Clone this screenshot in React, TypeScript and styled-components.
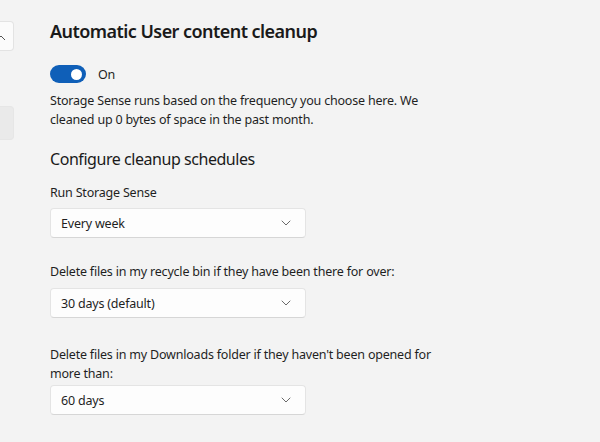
import React from "react";
import styled, { createGlobalStyle } from "styled-components";

const Global = createGlobalStyle`
  html, body { margin: 0; padding: 0; background: #f3f3f3; }
  body { font-family: "Noto Sans", "Open Sans", sans-serif; color: #1b1b1b; width: 600px; height: 442px; overflow: hidden; }
`;

const Page = styled.div`
  display: flex;
  height: 442px;
`;

const Stub = styled.div`
  width: 14px;
  display: flex;
  flex-direction: column;
  padding-top: 21px;
  gap: 55px;
`;

const StubCard = styled.div<{ $tone: "white" | "grey"; $h: number }>`
  height: ${(p) => p.$h}px;
  background: ${(p) => (p.$tone === "white" ? "#fbfbfb" : "#eaeaea")};
  border: 1px solid ${(p) => (p.$tone === "white" ? "#e3e3e3" : "#e6e6e6")};
  border-left: none;
  border-radius: 0 4px 4px 0;
  box-sizing: border-box;
  position: relative;
  overflow: hidden;
`;

const StubChevron = styled.svg`
  position: absolute;
  left: -4px;
  top: 13px;
`;

const Main = styled.div`
  margin-left: 36px;
  padding-top: 17px;
  display: flex;
  flex-direction: column;
  width: 440px;
`;

const Title = styled.h1`
  margin: 0;
  font-size: 18px;
  line-height: 28px;
  font-weight: 600;
  color: #1a1a1a;
  letter-spacing: -0.55px;
`;

const ToggleRow = styled.div`
  display: flex;
  align-items: center;
  gap: 12px;
  margin-top: 19px;
  height: 20px;
`;

const Toggle = styled.div`
  width: 36px;
  height: 18px;
  border-radius: 10px;
  background: #0f5fb8;
  position: relative;
  &::after {
    content: "";
    position: absolute;
    right: 4px;
    top: 4px;
    width: 11px;
    height: 11px;
    border-radius: 50%;
    background: #fff;
  }
`;

const Text = styled.p<{ $mt: number }>`
  margin: ${(p) => p.$mt}px 0 0;
  font-size: 12.5px;
  line-height: 19px;
  letter-spacing: -0.2px;
  color: #1f1f1f;
`;

const SubTitle = styled.h2`
  margin: 16px 0 0;
  font-size: 16px;
  line-height: 28px;
  font-weight: 400;
  letter-spacing: -0.45px;
  color: #1a1a1a;
`;

const Select = styled.div<{ $mt: number }>`
  margin-top: ${(p) => p.$mt}px;
  width: 256px;
  height: 30px;
  box-sizing: border-box;
  background: #fdfdfd;
  border: 1px solid #e4e4e4;
  border-bottom-color: #d6d6d6;
  border-radius: 4px;
  display: flex;
  align-items: center;
  justify-content: space-between;
  padding: 0 14px 0 10px;
  font-size: 12.5px;
  letter-spacing: -0.2px;
  color: #1f1f1f;
`;

const Chevron = () => (
  <svg width="10" height="6" viewBox="0 0 10 6">
    <path d="M1 1 L5 5 L9 1" fill="none" stroke="#6a6a6a" strokeWidth="1" strokeLinecap="round" strokeLinejoin="round" />
  </svg>
);

export default function App() {
  return (
    <Page>
      <Global />
      <Stub>
        <StubCard $tone="white" $h={30}>
          <StubChevron width="10" height="6" viewBox="0 0 10 6">
            <path d="M1 5 L5 1 L9 5" fill="none" stroke="#555" strokeWidth="1" />
          </StubChevron>
        </StubCard>
        <StubCard $tone="grey" $h={34} />
      </Stub>
      <Main>
        <Title>Automatic User content cleanup</Title>
        <ToggleRow>
          <Toggle />
          <Text $mt={0}>On</Text>
        </ToggleRow>
        <Text $mt={7}>
          Storage Sense runs based on the frequency you choose here. We
          <br />
          cleaned up 0 bytes of space in the past month.
        </Text>
        <SubTitle>Configure cleanup schedules</SubTitle>
        <Text $mt={10}>Run Storage Sense</Text>
        <Select $mt={6}>
          <span>Every week</span>
          <Chevron />
        </Select>
        <Text $mt={24}>Delete files in my recycle bin if they have been there for over:</Text>
        <Select $mt={7}>
          <span>30 days (default)</span>
          <Chevron />
        </Select>
        <Text $mt={27}>
          Delete files in my Downloads folder if they haven't been opened for
          <br />
          more than:
        </Text>
        <Select $mt={2}>
          <span>60 days</span>
          <Chevron />
        </Select>
      </Main>
    </Page>
  );
}
